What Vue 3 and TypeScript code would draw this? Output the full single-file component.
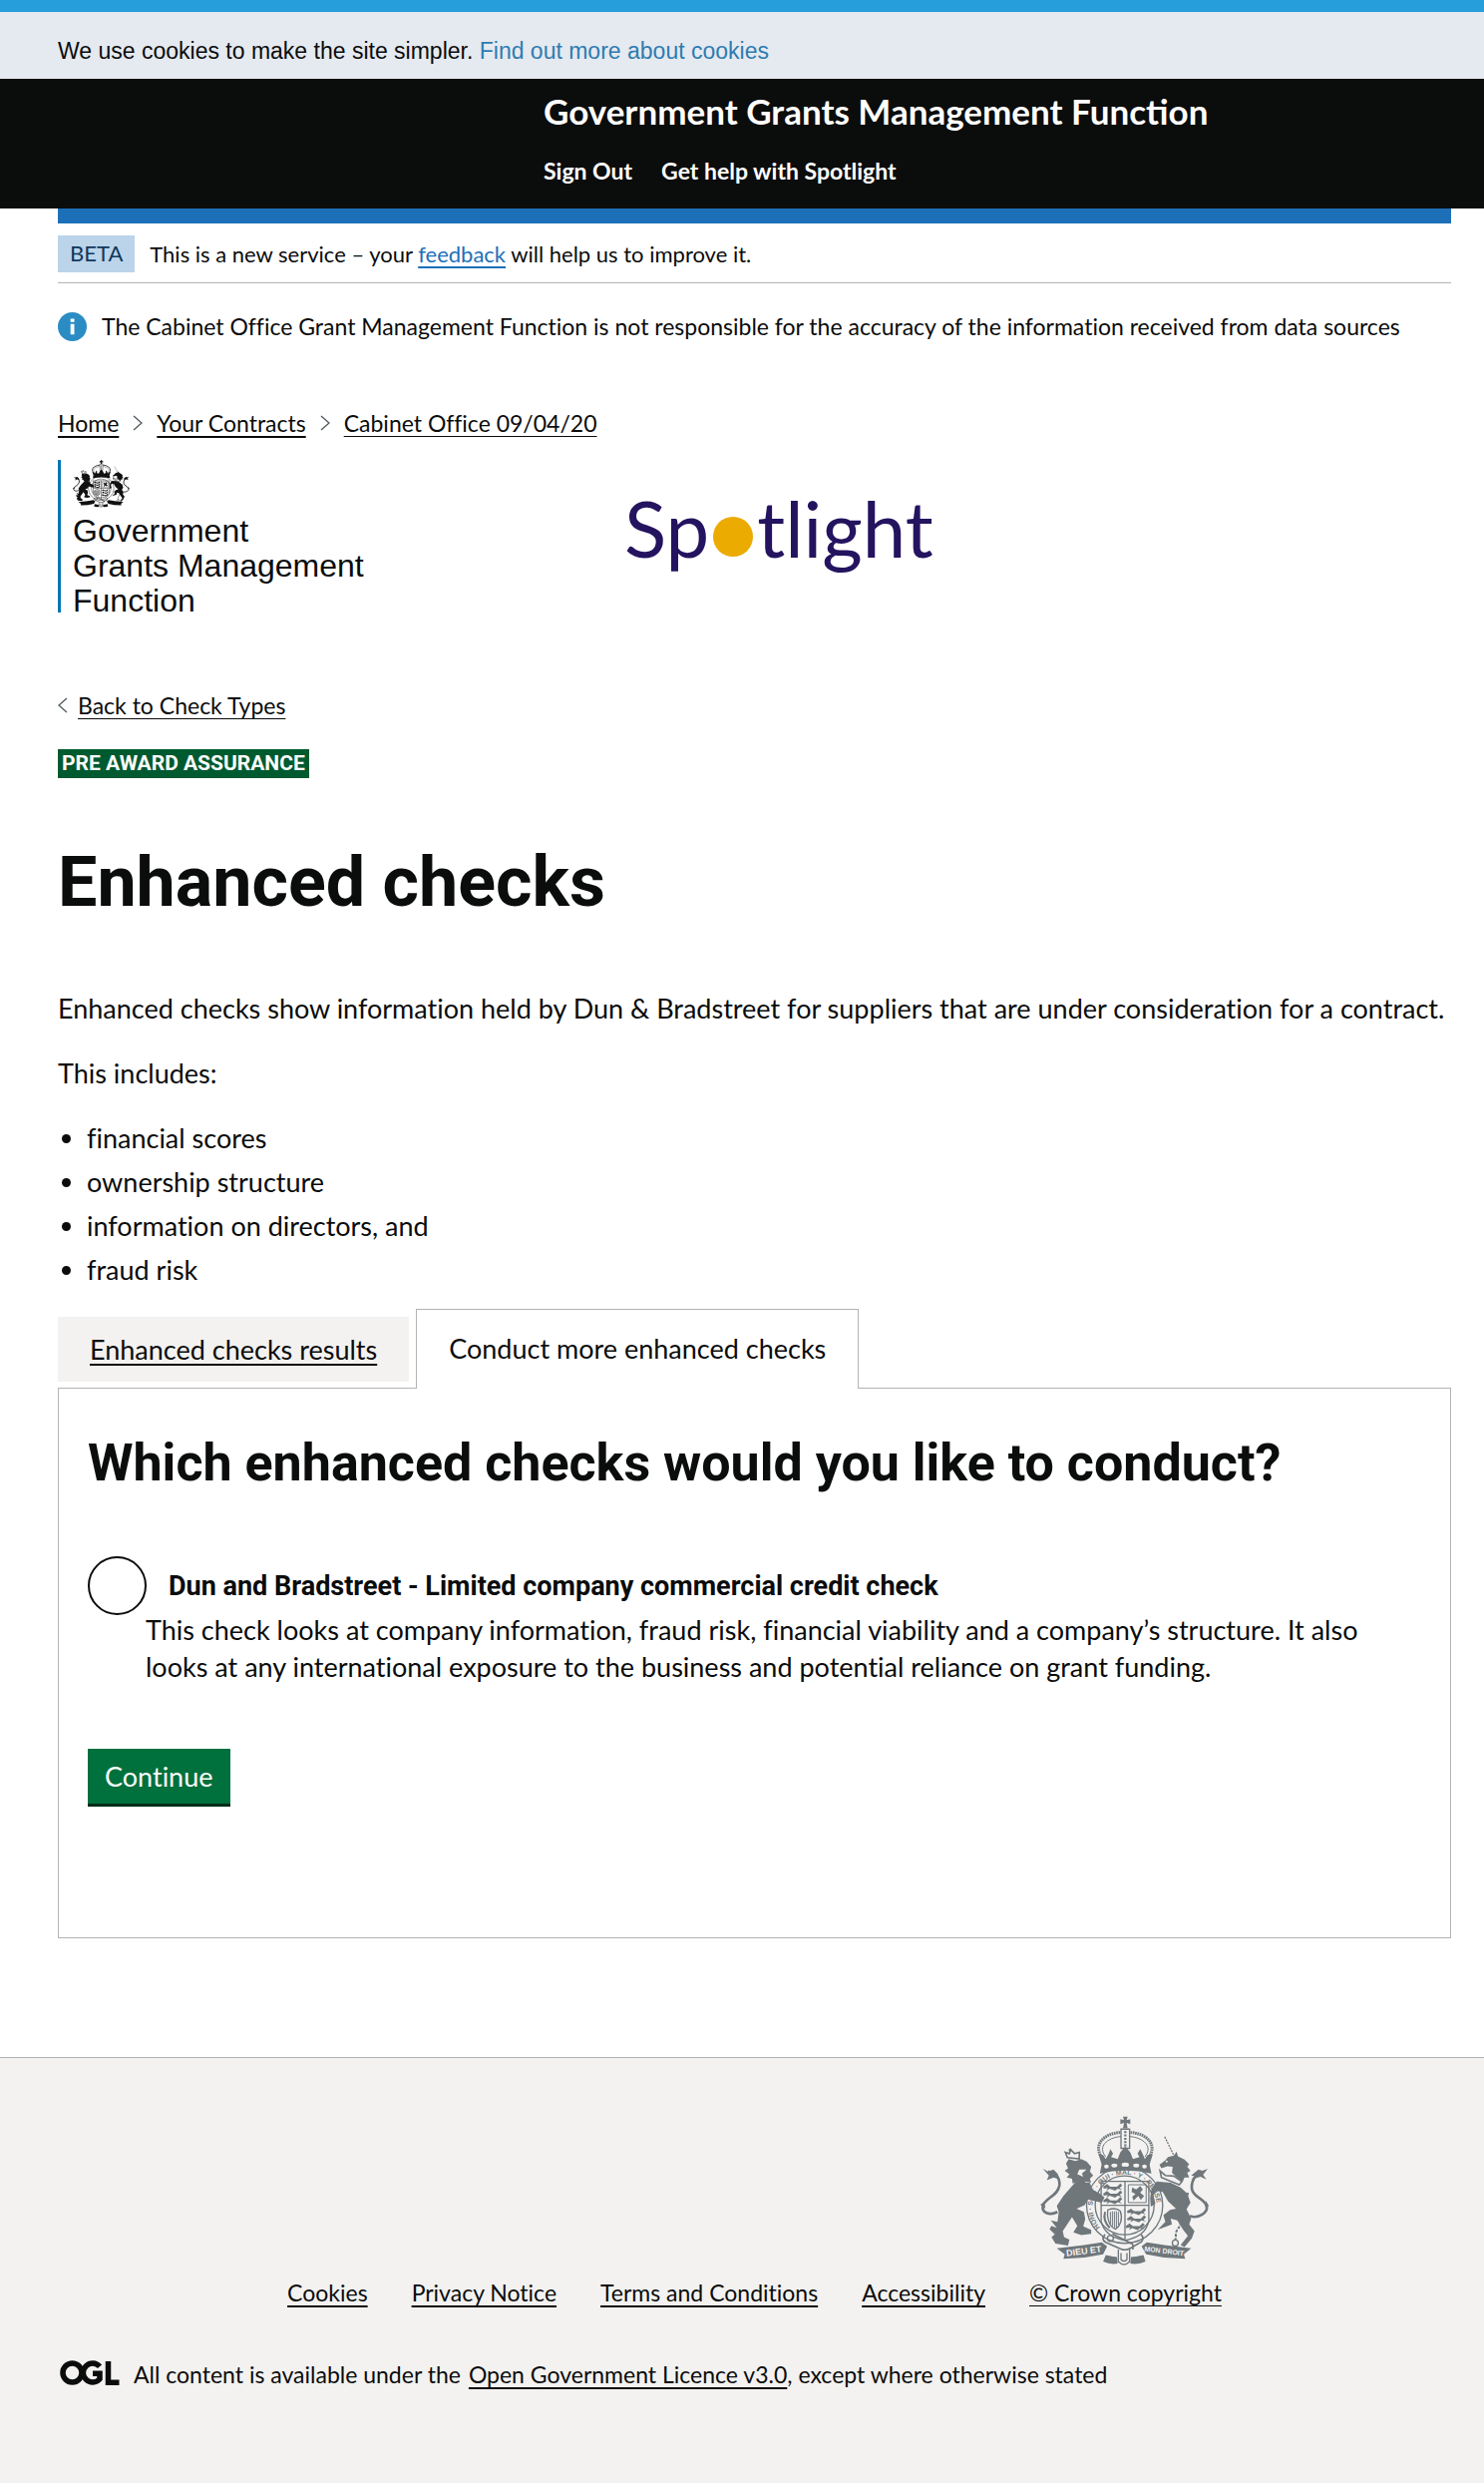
<script setup lang="ts">
import { ref } from 'vue'

interface PageLink {
  label: string
  thin?: boolean
}

const breadcrumbs: PageLink[] = [
  { label: 'Home' },
  { label: 'Your Contracts' },
  { label: 'Cabinet Office 09/04/20', thin: true },
]
const included: string[] = ['financial scores', 'ownership structure', 'information on directors, and', 'fraud risk']
const footerLinks: PageLink[] = [
  { label: 'Cookies' },
  { label: 'Privacy Notice' },
  { label: 'Terms and Conditions' },
  { label: 'Accessibility' },
]
const selectedCheck = ref<string>('')
</script>

<template>
  <div class="page">
    <!-- Royal arms, shared by the department logo and the footer -->
    <svg class="defs" width="0" height="0" aria-hidden="true">
      <defs>
        <g id="supporter-lion">
          <path d="M150 204 L158 190 L178 196 L196 190 L212 198 L226 214 L222 228 L232 240 L222 250 L226 262 L210 258 L200 268 L186 258 L170 264 L168 250 L152 246 L160 236 L146 226 L156 218 Z" />
          <path d="M180 258 L222 262 L230 284 L252 294 L266 306 L258 322 L238 318 L216 312 L206 330 L182 340 L204 350 L208 372 L202 394 L226 404 L226 416 L196 420 L172 412 L184 392 L168 366 L152 390 L140 408 L144 426 L160 434 L156 452 L118 446 L106 426 L116 418 L100 402 L106 392 L122 398 L104 376 L124 380 L128 350 L122 332 L142 302 Z" />
          <path d="M124 350 C98 364 76 350 80 332 C86 308 126 302 130 270 C132 246 116 232 96 228" fill="none" stroke="currentColor" stroke-width="8" />
          <path d="M80 220 L96 228 L112 222 L124 234 L132 252 L112 246 L92 254 L98 240 Z M84 320 L72 328 L88 340 Z" />
          <path d="M154 186 L148 170 L160 174 L164 162 L176 174 L190 170 L190 190 Z" fill="none" stroke="currentColor" stroke-width="5" />
          <circle cx="162" cy="163" r="4" />
        </g>
        <g id="supporter-unicorn">
          <path d="M448 123 L478 184" fill="none" stroke="currentColor" stroke-width="4" stroke-dasharray="6 3" />
          <path d="M432 208 L450 194 L458 184 L476 180 L484 168 L488 182 L508 192 L522 206 L516 214 L526 226 L516 232 L522 246 L508 246 L502 260 L488 248 L470 232 L472 214 L456 212 L438 218 Z" />
          <path d="M434 226 L450 240 L476 242 L500 258 L492 268 L462 256 L438 246 Z" fill="none" stroke="currentColor" stroke-width="5" />
          <path d="M424 258 L466 262 L496 276 L516 294 L526 322 L514 342 L528 370 L522 388 L538 408 L530 430 L508 456 L496 450 L518 422 L504 404 L486 376 L466 370 L470 388 L442 398 L426 404 L450 380 L444 360 L464 344 L482 340 L458 318 L442 290 L424 286 L414 300 L420 326 L406 334 L404 308 L408 280 Z" />
          <path d="M524 362 C548 372 582 352 574 330 C562 306 534 306 530 280 C528 252 544 236 562 230" fill="none" stroke="currentColor" stroke-width="8" />
          <path d="M578 220 L562 226 L550 222 L528 240 L538 242 L528 252 L556 244 L574 252 L564 238 Z M572 316 L582 332 L570 336 Z" />
          <path d="M518 292 C508 344 502 380 488 402 C478 412 484 424 480 434" fill="none" stroke="currentColor" stroke-width="6" stroke-dasharray="9 4" />
          <circle cx="480" cy="444" r="9" fill="none" stroke="currentColor" stroke-width="4" />
        </g>
        <g id="royal-crown">
          <path d="M322 62 H336 L333 73 L344 70 V85 L333 81 L336 98 H322 L325 81 L314 85 V70 L325 73 Z" />
          <path d="M262 190 C228 150 262 112 316 110 M396 190 C430 150 396 112 342 110" fill="none" stroke="currentColor" stroke-width="9" stroke-dasharray="5 2" />
          <path d="M270 184 C244 152 274 126 316 122 M388 184 C414 152 384 126 342 122" fill="none" stroke="currentColor" stroke-width="3" />
          <path d="M316 100 H342 V158 H316 Z" fill="none" stroke="currentColor" stroke-width="4" />
          <path d="M329 106 V156" fill="none" stroke="currentColor" stroke-width="7" stroke-dasharray="6 4" />
          <path d="M248 176 L262 178 L270 190 L278 176 L284 160 L292 174 L286 184 L306 190 L314 170 L329 152 L344 170 L352 190 L372 184 L366 174 L374 160 L382 176 L388 190 L396 178 L412 176 L402 208 H258 Z" />
          <path d="M258 205 Q329 190 402 205 L408 234 Q329 216 252 234 Z" />
        </g>
        <g id="royal-shield">
          <circle cx="327" cy="330" r="115" fill="none" stroke="currentColor" stroke-width="4" />
          <circle cx="327" cy="330" r="89" fill="none" stroke="currentColor" stroke-width="4" />
          <path d="M256 258 H400 V378 Q390 424 328 436 Q266 424 256 378 Z" class="shield-field" stroke="currentColor" stroke-width="4" />
          <path d="M328 258 V434 M256 330 H400" fill="none" stroke="currentColor" stroke-width="4" />
          <path id="passant" d="M262 274 L274 266 L284 274 H304 L314 264 L320 270 L312 278 L320 284 L306 280 L298 286 L282 280 L272 286 L276 278 L264 280 Z" />
          <use href="#passant" y="21" />
          <use href="#passant" y="41" />
          <use href="#passant" x="72" y="74" />
          <use href="#passant" x="72" y="96" />
          <use href="#passant" x="68" y="119" />
          <path d="M338 268 H392 V322 H338 Z" fill="none" stroke="currentColor" stroke-width="3" />
          <path d="M350 276 L362 282 L374 272 L382 282 L374 292 L386 302 L376 314 L368 302 L354 316 L350 304 L360 296 L348 290 Z" />
          <path d="M276 344 C292 338 306 340 314 348 C322 372 314 392 300 402 C280 396 272 366 276 344 Z" fill="none" stroke="currentColor" stroke-width="4" />
          <path d="M284 350 V386 M290 348 V394 M296 348 V398 M302 348 V398 M308 350 V390" fill="none" stroke="currentColor" stroke-width="3" />
          <path d="M268 350 Q260 376 282 398" fill="none" stroke="currentColor" stroke-width="6" />
        </g>
        <g id="royal-ribbon">
          <path d="M122 460 L204 450 L258 442 L274 454 L262 478 L206 488 L142 492 L146 478 Z" />
          <path d="M528 460 L448 450 L394 442 L378 454 L392 478 L446 488 L510 492 L506 478 Z" />
          <path d="M270 480 Q296 486 304 486 L306 506 Q284 510 262 500 Z M384 480 Q358 486 346 486 L344 506 Q370 510 390 500 Z" />
          <path d="M268 418 Q254 432 270 442 L316 462 Q330 468 344 460 L378 440 Q388 428 376 418 M290 416 L352 448 M352 448 V464" fill="none" stroke="currentColor" stroke-width="5" />
          <path d="M308 464 V500 Q325 518 342 500 V464 M316 474 V494 Q325 504 334 494 V474" fill="none" stroke="currentColor" stroke-width="4" />
          <circle cx="284" cy="430" r="9" fill="none" stroke="currentColor" stroke-width="4" />
        </g>
        <path id="garter-line" d="M263 407 A97 97 0 1 1 391 407" />
      </defs>
    </svg>

    <div class="top-stripe"></div>
    <div class="cookie-bar">
      We use cookies to make the site simpler. <a href="#cookies">Find out more about cookies</a>
    </div>

    <header class="site-header">
      <div class="header-content">
        <a class="service-name" href="#home">Government Grants Management Function</a>
        <nav class="header-nav">
          <a href="#sign-out">Sign Out</a>
          <a href="#help">Get help with Spotlight</a>
        </nav>
      </div>
    </header>

    <div class="container">
      <div class="header-rule"></div>
      <div class="phase-banner">
        <strong class="phase-tag">BETA</strong>
        <span>This is a new service – your <a href="#feedback">feedback</a> will help us to improve it.</span>
      </div>
      <div class="notice">
        <svg width="29" height="29" viewBox="0 0 29 29" aria-hidden="true">
          <circle cx="14.5" cy="14.5" r="14.5" fill="#2b8cc4" />
          <path d="M12.7 6.5h3.8v3.3h-3.8zM12.7 11.8h3.8v10.4h-3.8z" fill="#fff" />
        </svg>
        <span>The Cabinet Office Grant Management Function is not responsible for the accuracy of the information received from data sources</span>
      </div>

      <nav class="breadcrumbs" aria-label="Breadcrumb">
        <template v-for="(crumb, i) in breadcrumbs" :key="crumb.label">
          <svg v-if="i > 0" width="10" height="16" viewBox="0 0 10 16" aria-hidden="true">
            <path d="M1 1l8 7-8 7" fill="none" stroke="#505a5f" stroke-width="1.3" />
          </svg>
          <a href="#crumb" :class="{ thin: crumb.thin }">{{ crumb.label }}</a>
        </template>
      </nav>

      <div class="logos">
        <div class="department">
          <svg width="57" height="48" viewBox="72 60 512 455" preserveAspectRatio="none" role="img" aria-label="Royal arms">
            <use href="#supporter-lion" />
            <use href="#supporter-unicorn" />
            <use href="#royal-crown" />
            <use href="#royal-shield" />
            <use href="#royal-ribbon" />
          </svg>
          <div class="department-name">Government<br />Grants Management<br />Function</div>
        </div>
        <div class="spotlight">
          <span>Sp</span><i class="spot"></i><span>tlight</span>
        </div>
      </div>

      <main>
        <div class="back">
          <svg width="10" height="16" viewBox="0 0 10 16" aria-hidden="true">
            <path d="M9 1L1 8l8 7" fill="none" stroke="#505a5f" stroke-width="1.3" />
          </svg>
          <a class="thin" href="#check-types">Back to Check Types</a>
        </div>
        <strong class="status-tag">PRE AWARD ASSURANCE</strong>
        <h1>Enhanced checks</h1>
        <p>Enhanced checks show information held by Dun &amp; Bradstreet for suppliers that are under consideration for a contract.</p>
        <p>This includes:</p>
        <ul class="included">
          <li v-for="item in included" :key="item">{{ item }}</li>
        </ul>

        <div class="tabs">
          <a class="tab" href="#results">Enhanced checks results</a>
          <a class="tab tab-active" href="#conduct">Conduct more enhanced checks</a>
        </div>
        <form class="panel" @submit.prevent>
          <h2>Which enhanced checks would you like to conduct?</h2>
          <div class="choice">
            <input id="dnb-check" v-model="selectedCheck" type="radio" name="check" value="dnb" aria-describedby="dnb-hint" />
            <label for="dnb-check">Dun and Bradstreet - Limited company commercial credit check</label>
          </div>
          <div id="dnb-hint" class="hint">
            This check looks at company information, fraud risk, financial viability and a company’s structure. It also looks at any international exposure to the business and potential reliance on grant funding.
          </div>
          <button type="submit">Continue</button>
        </form>
      </main>
    </div>

    <footer class="site-footer">
      <div class="footer-links">
        <a v-for="link in footerLinks" :key="link.label" href="#footer">{{ link.label }}</a>
        <div class="crown">
          <svg width="170" height="151" viewBox="72 60 512 455" role="img" aria-label="Royal arms">
            <use href="#supporter-lion" />
            <use href="#supporter-unicorn" />
            <use href="#royal-crown" />
            <g fill="#f3f2f1">
              <ellipse cx="272" cy="213" rx="7" ry="6" />
              <ellipse cx="296" cy="210" rx="9" ry="6" />
              <ellipse cx="329" cy="208" rx="11" ry="7" />
              <ellipse cx="362" cy="210" rx="9" ry="6" />
              <ellipse cx="387" cy="213" rx="7" ry="6" />
              <circle cx="454" cy="198" r="3" />
              <path d="M212 222l-14 12 4 10-18-8 6-14z" />
            </g>
            <use href="#royal-shield" />
            <use href="#royal-ribbon" />
            <g class="motto">
              <text font-size="21"><textPath href="#garter-line" startOffset="14">HONI · SOIT · QUI · MAL · Y · PENSE</textPath></text>
              <g fill="#f3f2f1">
                <text x="152" y="484" font-size="27" transform="rotate(-7 152 484)">DIEU ET</text>
                <text x="386" y="468" font-size="21" transform="rotate(7 386 468)">MON DROIT</text>
              </g>
            </g>
          </svg>
          <a class="thin" href="#copyright">© Crown copyright</a>
        </div>
      </div>
      <div class="licence">
        <svg width="60" height="25" viewBox="0 0 60 25" role="img" aria-label="OGL">
          <g fill="none" stroke="#0b0c0c" stroke-width="5.5">
            <ellipse cx="12.5" cy="12.5" rx="9.5" ry="9.5" />
            <path d="M40 6.2a9.5 9.5 0 1 0 0 12.6v-5.5h-7M48.5 1v21.2h11" />
          </g>
        </svg>
        <span>All content is available under the</span>
        <span><a href="#licence">Open Government Licence v3.0</a>, except where otherwise stated</span>
      </div>
    </footer>
  </div>
</template>

<style>
body {
  margin: 0;
  background: #fff;
}
</style>

<style scoped>
.page {
  color: #0b0c0c;
  font-family: Lato, "Liberation Sans", sans-serif;
  font-size: 23px;
  font-variant-ligatures: none;
  line-height: 30px;
}
h1,
h2,
.status-tag,
.choice label {
  font-family: Roboto, "Liberation Sans", sans-serif;
  font-weight: 700;
}
.defs {
  position: absolute;
}
.shield-field {
  fill: none;
}
a {
  color: inherit;
  text-decoration: underline;
  text-decoration-thickness: 2px;
  text-underline-offset: 4px;
  text-decoration-skip-ink: none;
}
a.thin {
  text-decoration-thickness: 1px;
}
.top-stripe {
  height: 12px;
  background: #259edb;
}
.cookie-bar {
  padding: 24px 58px 13px;
  background: #e5e9f0;
  font-family: "Liberation Sans", Arial, sans-serif;
}
.cookie-bar a {
  color: #2e7cb0;
  text-decoration: none;
}
.site-header {
  padding: 12px 33px 23px 58px;
  background: #0b0c0c;
  color: #fff;
  font-variant-ligatures: normal;
  font-weight: 700;
}
.header-content {
  margin-left: 487px;
}
.site-header a {
  text-decoration: none;
}
.service-name {
  display: block;
  font-size: 35px;
  line-height: 40px;
}
.header-nav {
  display: flex;
  gap: 29px;
  margin-top: 25px;
}
.container {
  margin: 0 33px 0 58px;
}
.header-rule {
  height: 15px;
  background: #1d70b8;
}
.phase-banner {
  display: flex;
  align-items: center;
  gap: 15px;
  padding: 12px 0 10px;
  border-bottom: 1px solid #b1b4b6;
  font-size: 22px;
}
.phase-tag {
  padding: 3px 12px 4px;
  background: #bbd4ea;
  color: #0f385c;
  font-weight: 400;
}
.phase-banner a {
  color: #1d70b8;
}
.notice {
  display: flex;
  align-items: center;
  gap: 15px;
  margin-top: 28px;
}
.notice svg {
  flex: none;
}
.breadcrumbs {
  display: flex;
  align-items: center;
  gap: 14px;
  margin-top: 67px;
}
.logos {
  display: flex;
  margin-top: 22px;
}
.department {
  box-sizing: border-box;
  width: 568px;
  padding-left: 12px;
  border-left: 3px solid #0076b6;
}
.department svg {
  display: block;
  color: #111;
  fill: currentColor;
}
.department-name {
  margin: 6px 0 -6px;
  font-family: "Liberation Sans", Arial, sans-serif;
  font-size: 32px;
  line-height: 35px;
}
.spotlight {
  display: flex;
  align-items: center;
  height: 153px;
  color: #24135f;
  font-size: 78px;
}
.spotlight span {
  padding-bottom: 18px;
}
.spot {
  width: 40px;
  height: 40px;
  margin: 0 4px;
  border-radius: 50%;
  background: #ebab00;
}
.back {
  display: flex;
  align-items: center;
  gap: 10px;
  margin-top: 78px;
}
.status-tag {
  display: table;
  margin-top: 29px;
  padding: 0 4px;
  background: #005a30;
  color: #fff;
  font-size: 21px;
  line-height: 29px;
}
h1 {
  margin: 66px 0 70px;
  font-size: 70px;
  line-height: 76px;
}
p {
  margin: 0 0 27px;
  font-size: 27px;
  line-height: 38px;
}
.included {
  display: flex;
  flex-direction: column;
  gap: 6px;
  margin: 0;
  padding-left: 29px;
  font-size: 27px;
  line-height: 38px;
}
.tabs {
  display: flex;
  align-items: center;
  gap: 7px;
  margin: 20px 0 -1px;
  font-size: 27px;
  line-height: 38px;
}
.tab {
  padding: 14px 32px 13px;
  background: #f3f2f1;
}
.tab-active {
  position: relative;
  padding: 20px 32px 21px;
  border: 1px solid #b1b4b6;
  border-bottom: 0;
  background: #fff;
  text-decoration: none;
}
.panel {
  padding: 45px 29px 131px;
  border: 1px solid #b1b4b6;
}
h2 {
  margin: 0;
  font-size: 52px;
  line-height: 60px;
}
.choice {
  display: flex;
  align-items: center;
  gap: 22px;
  margin-top: 63px;
}
.choice input {
  appearance: none;
  box-sizing: border-box;
  width: 59px;
  height: 59px;
  margin: 0;
  border: 2px solid #0b0c0c;
  border-radius: 50%;
}
.choice input:checked {
  background: radial-gradient(#0b0c0c 14px, transparent 15px);
}
.choice label {
  font-size: 27px;
}
.hint {
  margin: -4px 0 0 58px;
  font-size: 27px;
  line-height: 37px;
}
button {
  display: block;
  margin-top: 64px;
  padding: 9px 17px 8px;
  border: 0;
  border-bottom: 3px solid #002d18;
  background: #00703c;
  color: #fff;
  font: inherit;
  font-size: 27px;
  line-height: 38px;
}
.site-footer {
  margin-top: 119px;
  padding: 58px 33px 94px 58px;
  border-top: 1px solid #b1b4b6;
  background: #f3f2f1;
}
.footer-links {
  display: flex;
  align-items: flex-end;
  justify-content: center;
  gap: 44px;
}
.crown {
  display: flex;
  flex-direction: column;
  align-items: center;
  gap: 11px;
}
.crown svg {
  color: #6f777b;
  fill: currentColor;
}
.motto {
  font-family: "Liberation Sans", Arial, sans-serif;
  font-weight: 700;
}
.licence {
  display: flex;
  align-items: center;
  gap: 14px;
  margin-top: 52px;
}
.licence span + span {
  margin-left: -6px;
}
.licence svg {
  margin: 0 0 4px 2px;
}
</style>
